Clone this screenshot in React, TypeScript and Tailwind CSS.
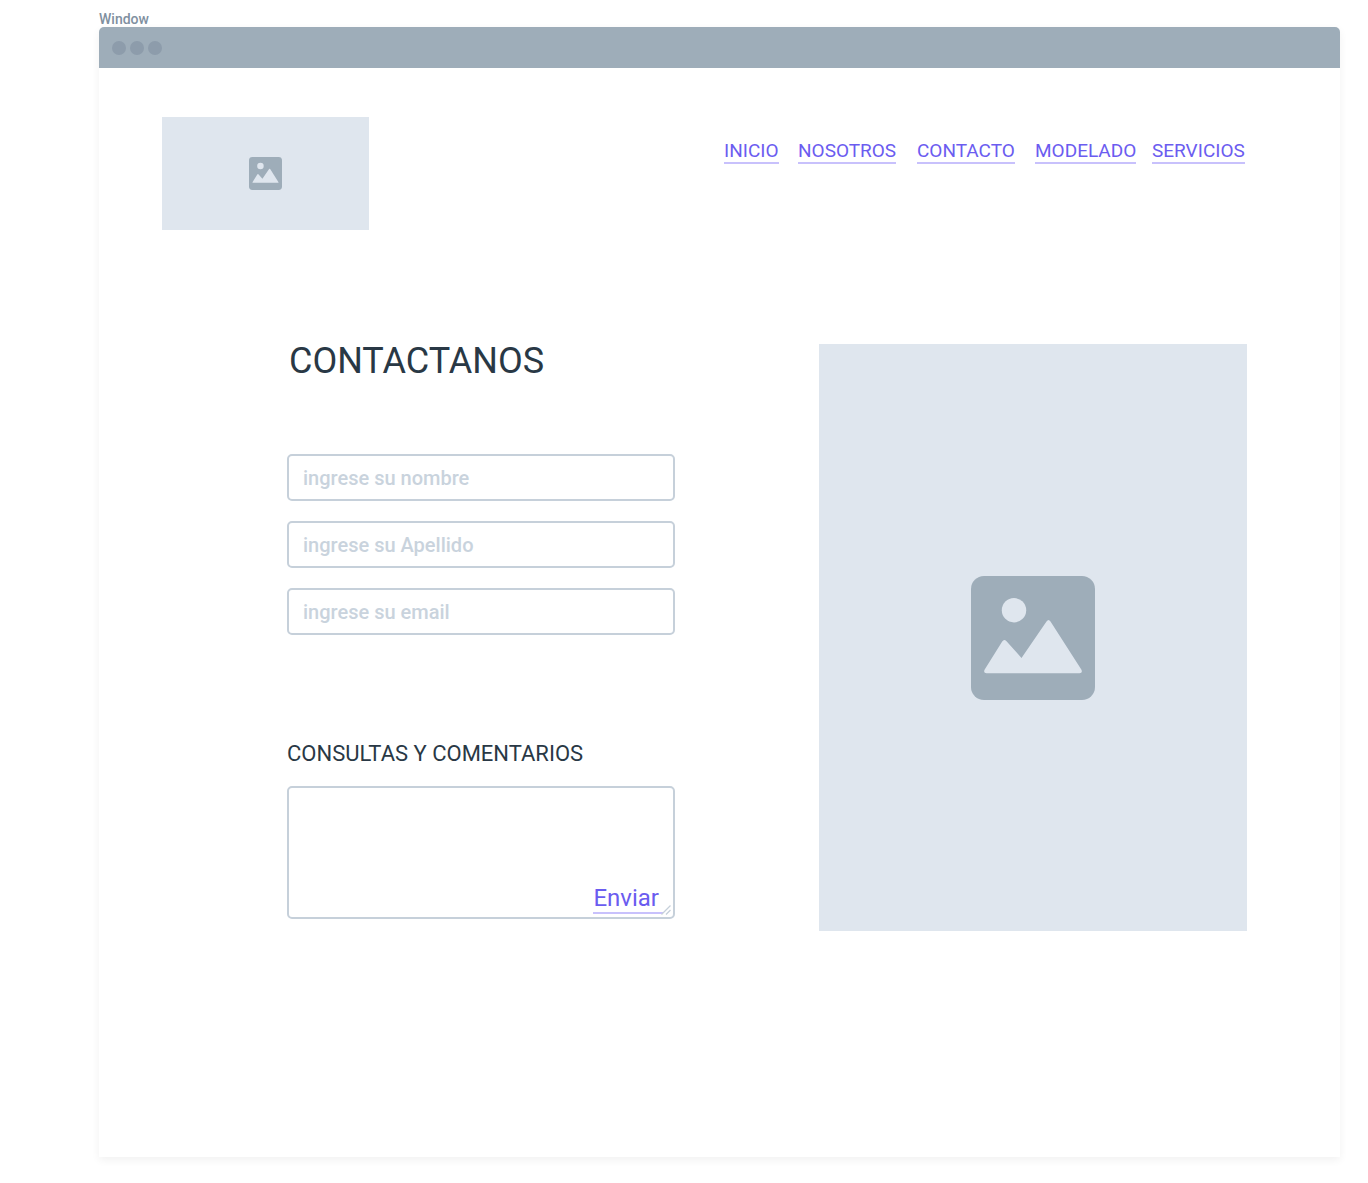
const navLinks = ["INICIO", "NOSOTROS", "CONTACTO", "MODELADO", "SERVICIOS"];

const fields = [
  { id: "nombre", label: "Nombre", type: "text", placeholder: "ingrese su nombre" },
  { id: "apellido", label: "Apellido", type: "text", placeholder: "ingrese su Apellido" },
  { id: "email", label: "Email", type: "email", placeholder: "ingrese su email" },
];

function PictureIcon({ className }: { className: string }) {
  return (
    <svg viewBox="0 0 124 124" className={className} aria-hidden="true">
      <rect width="124" height="124" rx="13" fill="#9eadb9" />
      <circle cx="43" cy="34.200" r="12.200" fill="#dfe6ee" />
      <path
        d="M13.700 93.500 L31.200 65.500 Q33 62.700 35.300 65 L50.500 82 L75.500 45.500 Q77.500 42.500 79.500 45.500 L110.300 93.500 Q112 97.200 108.500 97.200 H15.500 Q12 97.200 13.700 93.500 Z"
        fill="#dfe6ee"
      />
    </svg>
  );
}

export default function App() {
  return (
    <div className="bg-white pt-3 pr-7 pb-[26px] pl-[99px] font-['Roboto',sans-serif] text-[#293845]">
      <p className="h-[15px] text-sm leading-[14px] font-medium text-[#8090a0]">Window</p>
      <div className="rounded-t-[5px] bg-white shadow-[0_3px_9px_rgba(0,0,0,0.06)]">
        <div className="flex h-[41px] items-center gap-1 rounded-t-[5px] bg-[#9eadb9] px-[13px]">
          <span className="size-3.5 rounded-full bg-[#8d9cab]" />
          <span className="size-3.5 rounded-full bg-[#8d9cab]" />
          <span className="size-3.5 rounded-full bg-[#8d9cab]" />
        </div>

        <div className="pt-[49px] pr-[93px] pb-[226px] pl-[63px]">
          <header className="flex items-start justify-between">
            <div className="flex h-[113px] w-[207px] items-center justify-center bg-[#dfe6ee]">
              <PictureIcon className="size-[33px]" />
            </div>
            <nav className="grid grid-cols-[74px_119px_118px_117px_95px] pt-[23px]">
              {navLinks.map((name) => (
                <a
                  key={name}
                  href="#"
                  className="justify-self-start border-b-2 border-[#c8c1fc] text-[19px] leading-[22px] text-[#6b5cf0]"
                >
                  {name}
                </a>
              ))}
            </nav>
          </header>

          <main className="grid grid-cols-[388fr_428fr] gap-x-36 pt-[114px] pl-[125px]">
            <form onSubmit={(e) => e.preventDefault()}>
              <h1 className="pl-0.5 text-4xl leading-[34px]">CONTACTANOS</h1>
              <div className="flex flex-col gap-5 pt-[76px]">
                {fields.map((field) => (
                  <input
                    key={field.id}
                    id={field.id}
                    aria-label={field.label}
                    type={field.type}
                    placeholder={field.placeholder}
                    className="block h-[47px] w-full rounded-[5px] border-2 border-[#c6d0da] bg-white px-3.5 text-xl font-medium outline-none placeholder:text-[#c9d3dd]"
                  />
                ))}
              </div>
              <label htmlFor="comentarios" className="block pt-[107px] text-[22px] leading-6">
                CONSULTAS Y COMENTARIOS
              </label>
              <div className="relative pt-5">
                <textarea
                  id="comentarios"
                  className="block h-[133px] w-full resize-none rounded-[5px] border-2 border-[#c6d0da] bg-white px-3.5 py-2 text-xl outline-none"
                />
                <button
                  type="submit"
                  className="absolute right-3 bottom-[5px] border-b-2 border-[#c8c1fc] pr-1 text-2xl leading-7 text-[#6b5cf0]"
                >
                  Enviar
                </button>
                <svg viewBox="0 0 10 10" className="absolute right-1 bottom-1 size-2.5" aria-hidden="true">
                  <path
                    d="M0.500 9.500 L9.500 0.500 M5 9.500 L9.500 5"
                    stroke="#c6d0da"
                    strokeWidth="1.300"
                    fill="none"
                  />
                </svg>
              </div>
            </form>
            <div className="flex h-[587px] items-center justify-center bg-[#dfe6ee]">
              <PictureIcon className="size-[124px]" />
            </div>
          </main>
        </div>
      </div>
    </div>
  );
}
